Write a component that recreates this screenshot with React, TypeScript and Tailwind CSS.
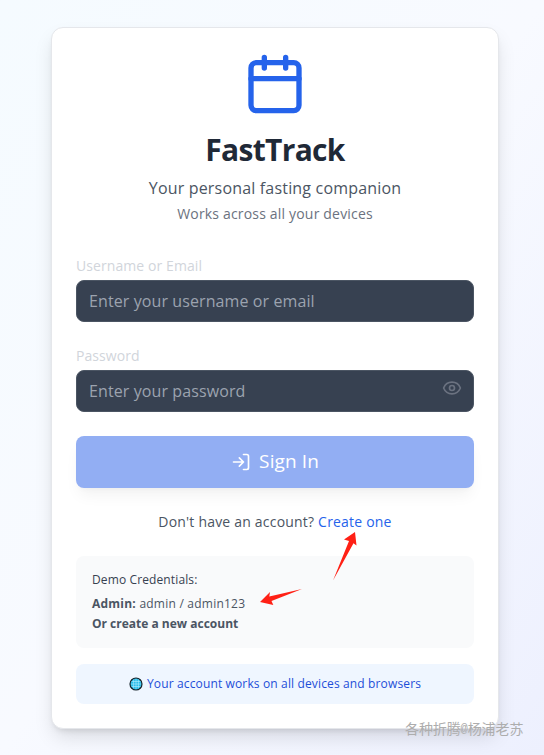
import React from "react";
import { Eye } from "lucide-react";

const labelClass = "block h-5 text-[14px] leading-5 tracking-[0.08px] text-[#d1d5db]";
const inputClass =
  "block h-[42px] w-full rounded-lg border border-[#4b5563] bg-[#374151] px-3 text-[16px] tracking-[0.1px] text-white placeholder:text-[#9ca3af] outline-none";

export default function App() {
  return (
    <div className="relative h-[755px] w-[544px] overflow-hidden bg-linear-to-br from-[#f5fbff] via-[#f8faff] to-[#edf0fe] pt-[27px] pl-[51px] font-['Open_Sans','Noto_Sans_CJK_SC',sans-serif]">
      <main className="flex h-[702px] w-[448px] flex-col rounded-xl border border-[#e5e7eb] bg-white px-6 pt-6 shadow-[0_10px_20px_-3px_rgba(0,0,0,0.13),0_4px_6px_-3px_rgba(0,0,0,0.12)]">
        <header className="flex flex-col items-center whitespace-nowrap">
          <svg className="size-16" viewBox="0 0 24 24" fill="none" stroke="#2563eb" strokeWidth="2" strokeLinecap="round" strokeLinejoin="round">
            <path d="M8 2v4M16 2v4M3 10h18" />
            <rect x="3" y="4" width="18" height="18" rx="2" />
          </svg>
          <h1 className="mt-4 h-9 text-[30px] leading-9 font-bold tracking-[-0.7px] text-[#1f2937]">FastTrack</h1>
          <p className="mt-2 h-6 text-[16px] leading-6 tracking-[0.18px] text-[#4b5563]">Your personal fasting companion</p>
          <p className="mt-1 h-5 text-[14px] leading-5 tracking-[0.18px] text-[#6b7280]">Works across all your devices</p>
        </header>

        <form className="mt-8">
          <label className={labelClass}>Username or Email</label>
          <input className={`${inputClass} mt-1`} placeholder="Enter your username or email" />
          <label className={`${labelClass} mt-6`}>Password</label>
          <div className="relative mt-1">
            <input className={inputClass} type="password" placeholder="Enter your password" />
            <Eye className="absolute top-2 right-3 size-5 text-[#6b7280]" />
          </div>
          <button type="button" className="mt-6 flex h-[52px] w-full items-center justify-center gap-2 rounded-lg bg-[#92aef3] text-[19px] tracking-[0.1px] text-white shadow-[0_10px_15px_-3px_rgba(0,0,0,0.05),0_4px_6px_-4px_rgba(0,0,0,0.05)]">
            <svg className="size-5" viewBox="0 0 24 24" fill="none" stroke="currentColor" strokeWidth="2" strokeLinecap="round" strokeLinejoin="round">
              <path d="M15 3h4a2 2 0 0 1 2 2v14a2 2 0 0 1-2 2h-4M10 17l5-5-5-5M15 12H3" />
            </svg>
            <span className="-mt-px">Sign In</span>
          </button>
        </form>

        <p className="mt-6 h-5 text-center text-[14px] leading-5 tracking-[0.2px] whitespace-nowrap text-[#4b5563]">
          <span>Don't have an account? </span>
          <a className="text-[#2563eb]">Create one</a>
        </p>

        <section className="mt-6 h-[92px] rounded-lg bg-[#f9fafb] px-4 pt-[14px] text-[12px] leading-5 whitespace-nowrap text-[#4b5563]">
          <p className="mb-1 tracking-[0.12px] text-[#374151]">Demo Credentials:</p>
          <p className="tracking-[0.23px]"><strong>Admin:</strong> <span>admin / admin123</span></p>
          <p className="font-bold">Or create a new account</p>
        </section>

        <div className="mt-4 flex h-10 items-center justify-center gap-1 rounded-lg bg-[#eff6ff] text-[12px] tracking-[0.14px] whitespace-nowrap text-[#1d4ed8]">
          <svg className="size-[14px]" viewBox="0 0 14 14" fill="none">
            <circle cx="7" cy="7" r="6" fill="#27bce9" stroke="#17242b" strokeWidth="1.2" />
            <path d="M2.5 4.5h9M2 7h10M2.5 9.5h9M7 2v10M4.6 2.5v9M9.4 2.5v9" stroke="#b5edff" strokeWidth=".6" />
          </svg>
          <span>Your account works on all devices and browsers</span>
        </div>
      </main>

      <svg className="pointer-events-none absolute inset-0 h-[755px] w-[544px]" viewBox="0 0 544 755" fill="#ff2015">
        <path d="M355 532 344 539.5 349 541 333 580.5 353.5 543.3 356.5 545.5Z" />
        <path d="M260 602 270 592 269.3 596.5 302 589 271.5 601 273.3 605Z" />
      </svg>
      <span className="absolute top-[717px] left-[405px] flex font-['Noto_Sans_CJK_SC',sans-serif] text-[14px] leading-[22px] tracking-[-0.1px] whitespace-nowrap text-[#adadad]">
        各种折腾<span className="pt-px font-['Liberation_Mono',monospace] text-[12px]">@</span>杨浦老苏
      </span>
    </div>
  );
}
